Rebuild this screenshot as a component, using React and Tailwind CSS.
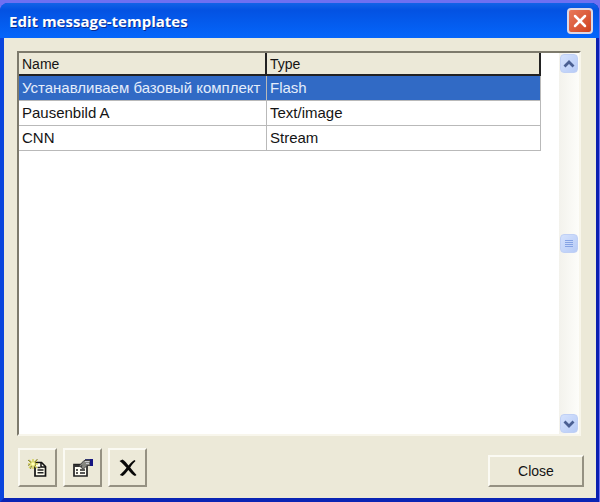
import { X } from "lucide-react";

const rows = [
  { name: "Устанавливаем базовый комплект", type: "Flash", selected: true },
  { name: "Pausenbild A", type: "Text/image", selected: false },
  { name: "CNN", type: "Stream", selected: false },
];

const raised =
  "border-2 border-t-[#fbfaf3] border-l-[#fbfaf3] border-r-[#959182] border-b-[#959182] bg-[#ece9d8]";

function NewIcon() {
  return (
    <svg width="22" height="20" viewBox="0 0 22 20" fill="none">
      <path d="M8 4.500h6.500l4 4v9.500h-10.500z" fill="#fffef0" stroke="#111" strokeWidth="1.700" />
      <path d="M14 4.500v4.500h4.500" stroke="#111" strokeWidth="1.500" />
      <path d="M10.500 9.500h3M10.500 12h6M10.500 14.800h6" stroke="#222" strokeWidth="1.400" />
      <path d="M6 1v10M1 6h10M2 2l8 8M10 2l-8 8" stroke="#d5d258" strokeWidth="1.500" />
      <path d="M1 2l3 2.500M4.500 8l-1 3M10.500 1L8 4M1 7.500l2-1" stroke="#85813a" />
      <circle cx="6" cy="6" r="1.800" fill="#ffffb8" />
    </svg>
  );
}

function PropertiesIcon() {
  return (
    <svg width="22" height="20" viewBox="0 0 22 20" fill="none">
      <path d="M2 6.500h13v11.500h-13z" fill="#fffef4" stroke="#222" strokeWidth="1.700" />
      <path d="M2 8h7" stroke="#333" strokeWidth="2" />
      <path d="M4 12h2M4 15h2M8 12h5M8 15h5" stroke="#222" strokeWidth="1.600" />
      <path d="M7 8l5-5.500h6v5h-3l-3.500 3.500-2.500-1.500 1-2-2 1.500z" fill="#85867f" stroke="#444" />
      <path d="M13 3.500h4.500M14 5.500h3" stroke="#c9cad0" />
      <path d="M13 1.500h5" stroke="#333970" />
      <path d="M18 1h3v7h-3z" fill="#151582" />
    </svg>
  );
}

function DeleteIcon() {
  return (
    <svg width="20" height="20" viewBox="0 0 20 20">
      <path
        d="M1.500 3L4.500 1.500C7 3 9 5.500 10.500 7.500C12.500 5 14.500 3 16.500 2L17.500 3C15.500 4.700 13.700 7 12.200 9.500C14.200 12 16.200 14.500 18.500 17L17 18C14.500 16.800 12.300 14.500 10.300 12C8.500 14.500 6.500 16.800 4.500 18L1.800 17C4.300 15 6.500 12.500 8.500 9.800C6.300 7.500 4.200 5 1.500 3Z"
        fill="#080808"
      />
    </svg>
  );
}

function Chevron({ down = false }) {
  return (
    <svg width="12" height="8" viewBox="0 0 12 8" fill="none">
      <path d={down ? "M1.500 1.500l4.500 4.500 4.500-4.500" : "M1.500 6.500l4.500-4.500 4.500 4.500"} stroke="#4a5f92" strokeWidth="2.800" />
    </svg>
  );
}

const scrollButton =
  "flex h-[19px] w-[18px] shrink-0 items-center justify-center rounded-sm border border-[#c0d0f5] bg-linear-to-br from-[#d5e2fd] to-[#b7cbf6]";

const toolButton = `flex h-[39px] w-[39px] items-center justify-center ${raised}`;

export default function App() {
  return (
    <div className="flex min-h-screen flex-col bg-[#6e70f2] pt-[3px] pr-px font-['Liberation_Sans',Arial,sans-serif] text-[15px] text-[#141414]">
      <main className="flex flex-1 flex-col rounded-t-lg border-r-[3px] border-b-4 border-l-4 border-t-0 border-r-[#0a1fb0] border-b-[#0a24b4] border-l-[#0a45dd] bg-[#0a45dd]">
        <header className="-mr-[3px] -ml-1 flex h-[35px] items-center justify-between rounded-t-lg bg-linear-to-b from-[#1363e6] via-[#0452e2] via-20% to-[#0566fb] pr-[6px] pl-[9px]">
          <h1 className="font-['Open_Sans','Noto_Sans',sans-serif] text-[15px] leading-5 font-bold text-white [text-shadow:1px_1px_#0a2b90]">
            Edit message-templates
          </h1>
          <button
            type="button"
            aria-label="Close window"
            className="flex h-[26px] w-[26px] items-center justify-center rounded-[4px] border-2 border-[#dfd8e4] bg-linear-to-br from-[#e8795a] to-[#cf401c] text-white"
          >
            <X size={20} strokeWidth={3} />
          </button>
        </header>

        <div className="flex flex-1 flex-col bg-[#ece9d8] pt-[13px] pr-[15px] pb-[11px] pl-[13px]">
          <div className="flex flex-1 border-2 border-t-[#7d7a6c] border-r-[#f8f6ec] border-b-[#f8f6ec] border-l-[#7d7a6c] bg-white">
            <div className="min-w-0 flex-1 pr-[18px]">
              <table className="w-full table-fixed border-separate border-spacing-0 text-left leading-5">
                <colgroup>
                  <col className="w-[248px]" />
                  <col />
                </colgroup>
                <thead>
                  <tr className="h-[23px] bg-[#ece9d8]">
                    <th className="border-r-2 border-b-2 border-[#222] p-0 pl-[3px] text-[14px] font-normal">Name</th>
                    <th className="border-r-2 border-b-2 border-[#222] p-0 pl-[3px] text-[14px] font-normal">Type</th>
                  </tr>
                </thead>
                <tbody>
                  {rows.map((row) => (
                    <tr key={row.name} className={row.selected ? "h-[25px] bg-[#316ac5] text-[#e4edfb]" : "h-[25px]"}>
                      <td className="overflow-hidden border-r border-b border-[#b9b9b9] p-0 pl-[3px] whitespace-nowrap">
                        {row.name}
                      </td>
                      <td className="border-r border-b border-[#b9b9b9] p-0 pl-[3px]">{row.type}</td>
                    </tr>
                  ))}
                </tbody>
              </table>
            </div>
            <div className="flex w-5 flex-col items-center justify-between bg-linear-to-r from-[#f3f2ec] to-[#fdfdfa] py-px">
              <button type="button" aria-label="Scroll up" className={scrollButton}>
                <Chevron />
              </button>
              <button type="button" aria-label="Scroll position" className={scrollButton}>
                <svg width="10" height="10" viewBox="0 0 10 10">
                  <path d="M1 1.500h8M1 3.500h8M1 5.500h8M1 7.500h8" stroke="#86a3e4" />
                </svg>
              </button>
              <button type="button" aria-label="Scroll down" className={scrollButton}>
                <Chevron down />
              </button>
            </div>
          </div>

          <footer className="-mr-[3px] flex items-end justify-between pt-3">
            <div className="flex gap-[6px] pl-px">
              <button type="button" aria-label="New template" className={toolButton}>
                <NewIcon />
              </button>
              <button type="button" aria-label="Template properties" className={toolButton}>
                <PropertiesIcon />
              </button>
              <button type="button" aria-label="Delete template" className={toolButton}>
                <DeleteIcon />
              </button>
            </div>
            <button type="button" className={`h-8 w-24 text-[14px] leading-5 ${raised}`}>
              Close
            </button>
          </footer>
        </div>
      </main>
    </div>
  );
}
